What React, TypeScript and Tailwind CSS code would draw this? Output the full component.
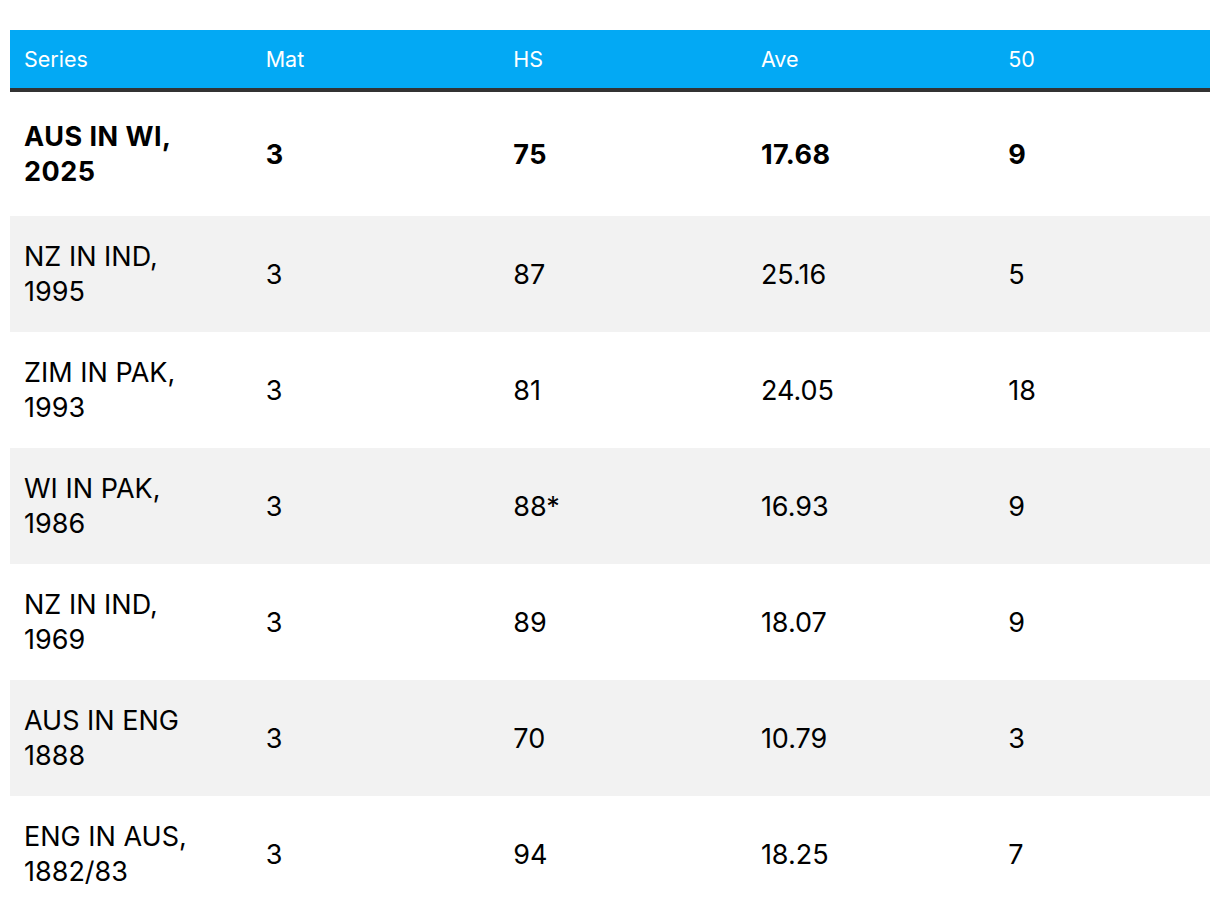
import React from "react";

type Row = { s1: string; s2: string; mat: string; hs: string; ave: string; fifty: string };

const rows: Row[] = [
  { s1: "AUS IN WI,", s2: "2025", mat: "3", hs: "75", ave: "17.68", fifty: "9" },
  { s1: "NZ IN IND,", s2: "1995", mat: "3", hs: "87", ave: "25.16", fifty: "5" },
  { s1: "ZIM IN PAK,", s2: "1993", mat: "3", hs: "81", ave: "24.05", fifty: "18" },
  { s1: "WI IN PAK,", s2: "1986", mat: "3", hs: "88*", ave: "16.93", fifty: "9" },
  { s1: "NZ IN IND,", s2: "1969", mat: "3", hs: "89", ave: "18.07", fifty: "9" },
  { s1: "AUS IN ENG", s2: "1888", mat: "3", hs: "70", ave: "10.79", fifty: "3" },
  { s1: "ENG IN AUS,", s2: "1882/83", mat: "3", hs: "94", ave: "18.25", fifty: "7" },
];

const grid = "grid grid-cols-[241.7px_247.6px_247.6px_247.3px_1fr]";

export default function App() {
  return (
    <div className="min-h-[922px] w-[1220px] bg-white pt-[30px] px-[10px] font-['Inter',sans-serif] text-black">
      <div className="w-[1200px]">
        <div className={`${grid} h-[62px] bg-[#03a9f4] border-b-[4px] border-[#333333] text-white text-[21.5px] items-center`}>
          {["Series", "Mat", "HS", "Ave", "50"].map((h) => (
            <div key={h} className="pl-[14px] pt-[1px]">{h}</div>
          ))}
        </div>
        {rows.map((r, i) => {
          const bold = i === 0;
          const bg = i % 2 === 1 ? "bg-[#f2f2f2]" : "bg-white";
          const h = bold ? "h-[124px]" : "h-[116px]";
          const w = bold ? "font-bold tracking-[0.5px]" : "font-normal";
          return (
            <div key={i} className={`${grid} ${h} ${bg} ${w} items-center text-[27px] leading-[35px]`}>
              <div className="pl-[14px]">
                <div>{r.s1}</div>
                <div>{r.s2}</div>
              </div>
              <div className="pl-[14px]">{r.mat}</div>
              <div className="pl-[14px]">{r.hs}</div>
              <div className="pl-[14px]">{r.ave}</div>
              <div className="pl-[14px]">{r.fifty}</div>
            </div>
          );
        })}
      </div>
    </div>
  );
}
